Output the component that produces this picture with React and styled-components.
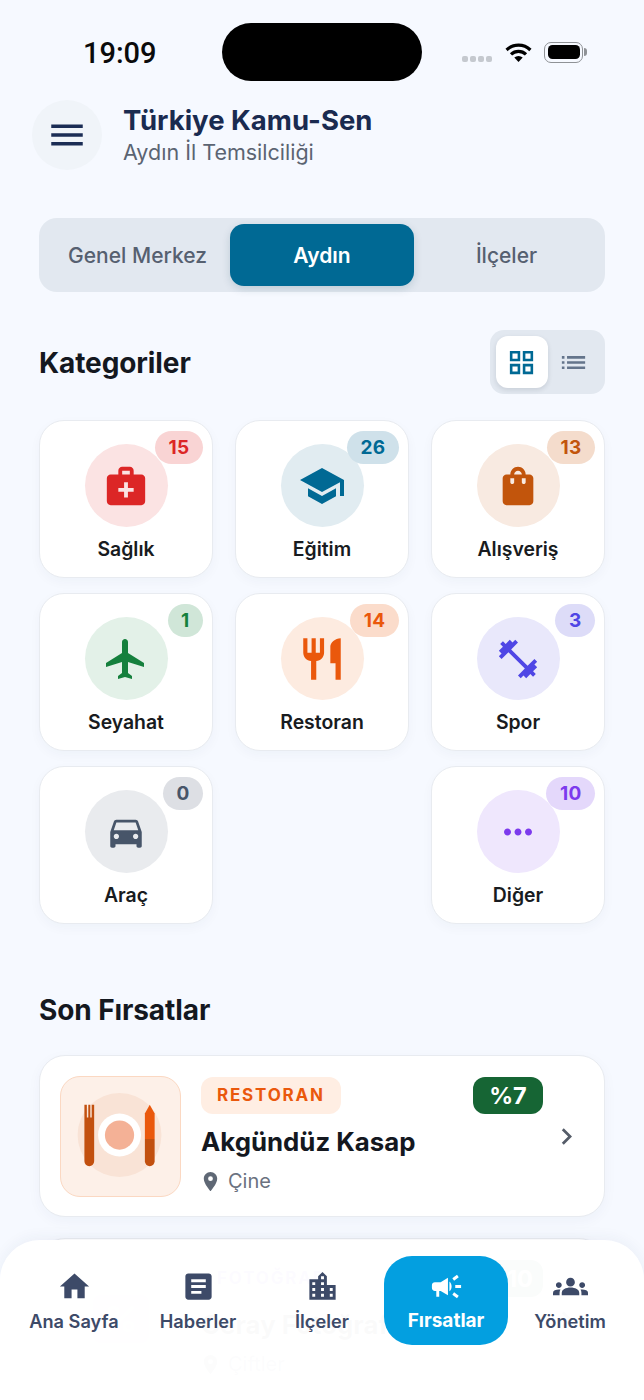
import React from 'react';
import styled, { createGlobalStyle } from 'styled-components';
import {
  MdMedicalServices, MdSchool, MdShoppingBag, MdFlight, MdRestaurant, MdFitnessCenter,
  MdDirectionsCar, MdMoreHoriz, MdHome, MdArticle, MdLocationCity, MdCampaign, MdGroups,
  MdLocationOn, MdChevronRight, MdMenu, MdGridView, MdList, MdPercent,
} from 'react-icons/md';

const GlobalStyle = createGlobalStyle`
  html, body { margin: 0; padding: 0; background: #f6f9ff; }
  * { box-sizing: border-box; }
  body { font-family: Inter, "Noto Sans", sans-serif; }
`;

const Screen = styled.div`
  position: relative;
  width: 644px;
  height: 1400px;
  overflow: hidden;
  background: #f6f9ff;
`;

const StatusBar = styled.div`
  display: flex;
  align-items: center;
  padding-top: 23px;
`;

const Time = styled.div`
  width: 222px;
  margin-top: 2px;
  padding-left: 83px;
  font-family: Roboto, Inter, sans-serif;
  font-size: 29px;
  font-weight: 500;
  color: #0b0b0b;
`;

const Island = styled.div`
  width: 200px;
  height: 58px;
  border-radius: 29px;
  background: #000;
`;

const StatusIcons = styled.div`
  display: flex;
  align-items: center;
  padding-left: 40px;
`;

const SignalDots = styled.div`
  display: flex;
  gap: 2px;
  margin-right: 13px;
  margin-top: 14px;
`;

const SignalDot = styled.span`
  width: 6px;
  height: 6px;
  border-radius: 2px;
  background: #c5c9cf;
`;

const Battery = styled.div`
  position: relative;
  width: 39px;
  height: 21px;
  margin-left: 12px;
  padding: 2.5px;
  border: 1.5px solid #8f9296;
  border-radius: 7px;
  &::before {
    content: '';
    display: block;
    height: 100%;
    border-radius: 4.5px;
    background: #000;
  }
  &::after {
    content: '';
    position: absolute;
    right: -5px;
    top: 5px;
    width: 3px;
    height: 8px;
    border-radius: 0 3px 3px 0;
    background: #8f9296;
  }
`;

const Header = styled.div`
  display: flex;
  align-items: center;
  gap: 21px;
  padding: 19px 0 0 32px;
`;

const MenuButton = styled.div`
  display: flex;
  align-items: center;
  justify-content: center;
  width: 70px;
  height: 70px;
  border-radius: 50%;
  background: #f0f4f9;
  color: #1b2d55;
  font-size: 42px;
`;

const HeaderTitle = styled.div`
  font-size: 27.5px;
  line-height: 33px;
  font-weight: 700;
  color: #1a2b50;
`;

const HeaderSub = styled.div`
  margin-top: 1px;
  font-size: 21.5px;
  line-height: 29px;
  color: #5b6472;
`;

const Segments = styled.div`
  display: flex;
  align-items: center;
  height: 74px;
  margin: 48px 39px 0;
  padding: 6px;
  border-radius: 18px;
  background: #e2e8f0;
`;

const Segment = styled.div`
  display: flex;
  align-items: center;
  justify-content: center;
  flex: ${(p) => (p.$active ? '0 0 184px' : '1')};
  height: 62px;
  border-radius: 14px;
  font-size: 21px;
  font-weight: ${(p) => (p.$active ? 600 : 500)};
  color: ${(p) => (p.$active ? '#fff' : '#566070')};
  background: ${(p) => (p.$active ? '#006994' : 'transparent')};
  box-shadow: ${(p) => (p.$active ? '0 3px 8px rgba(0,60,90,0.16)' : 'none')};
`;

const SectionHead = styled.div`
  display: flex;
  align-items: center;
  justify-content: space-between;
  margin: 38px 39px 26px;
`;

const SectionTitle = styled.h2`
  margin: 0;
  padding-top: 2px;
  font-size: 28px;
  line-height: 33px;
  font-weight: 700;
  letter-spacing: -0.1px;
  color: #14181f;
`;

const ViewToggle = styled.div`
  display: flex;
  align-items: center;
  width: 115px;
  height: 64px;
  padding: 6px;
  border-radius: 14px;
  background: #e2e8f0;
`;

const ToggleBtn = styled.div`
  display: flex;
  align-items: center;
  justify-content: center;
  width: 52px;
  height: 52px;
  border-radius: 12px;
  font-size: 31px;
  color: ${(p) => (p.$active ? '#006994' : '#64748b')};
  background: ${(p) => (p.$active ? '#fff' : 'transparent')};
  box-shadow: ${(p) => (p.$active ? '0 2px 5px rgba(15,23,42,0.12)' : 'none')};
`;

const CategoryGrid = styled.div`
  display: flex;
  flex-wrap: wrap;
  justify-content: space-between;
  row-gap: 15px;
  margin: 0 39px;
`;

const CategoryCard = styled.div`
  position: relative;
  display: flex;
  flex-direction: column;
  align-items: center;
  width: 174px;
  height: 158px;
  padding-top: 23px;
  border: 1px solid #e8ebf0;
  border-radius: 25px;
  background: #fff;
  box-shadow: 0 4px 12px rgba(30,50,90,0.035);
`;

const IconCircle = styled.div`
  display: flex;
  align-items: center;
  justify-content: center;
  width: 83px;
  height: 83px;
  border-radius: 50%;
  font-size: ${(p) => p.$size || 46}px;
  color: ${(p) => p.$color};
  background: ${(p) => p.$bg};
`;

const CategoryLabel = styled.div`
  margin-top: 10px;
  font-size: 19.4px;
  line-height: 24px;
  font-weight: 600;
  color: #181b20;
`;

const CountBadge = styled.div`
  position: absolute;
  top: 10px;
  right: 9px;
  min-width: 35px;
  height: 33px;
  padding: 0 13.5px;
  border-radius: 17px;
  font-size: 19px;
  line-height: 33px;
  font-weight: 700;
  letter-spacing: 0.3px;
  text-align: center;
  color: ${(p) => p.$color};
  background: ${(p) => p.$bg};
`;

const DealsTitle = styled(SectionTitle)`
  margin: 68px 39px 28px;
`;

const DealList = styled.div`
  display: flex;
  flex-direction: column;
  gap: 21px;
  margin: 0 39px;
`;

const DealCard = styled.div`
  display: flex;
  align-items: center;
  height: 162px;
  padding: 0 28px 0 20px;
  border: 1px solid #e8ebf0;
  border-radius: 26px;
  background: #fff;
  box-shadow: 0 4px 14px rgba(30,50,90,0.04);
`;

const DealImage = styled.div`
  display: flex;
  align-items: center;
  justify-content: center;
  flex: none;
  width: 121px;
  height: 121px;
  border: 1px solid ${(p) => p.$border};
  border-radius: 20px;
  background: ${(p) => p.$bg};
`;

const PercentTile = styled.div`
  display: flex;
  align-items: center;
  justify-content: center;
  width: 56px;
  height: 48px;
  border-radius: 8px;
  font-size: 40px;
  color: #fff;
  background: #e9b8f5;
`;

const DealBody = styled.div`
  flex: 1;
  min-width: 0;
  margin-left: 20px;
`;

const DealTop = styled.div`
  display: flex;
  align-items: center;
  justify-content: space-between;
  margin-right: 7px;
`;

const DealTag = styled.div`
  height: 37px;
  padding: 0 16px;
  border-radius: 12px;
  font-size: 17px;
  line-height: 37px;
  font-weight: 700;
  letter-spacing: 1.8px;
  color: ${(p) => p.$color};
  background: ${(p) => p.$bg};
`;

const Discount = styled.div`
  width: 70px;
  height: 37px;
  border-radius: 12px;
  font-size: 23.5px;
  line-height: 37px;
  font-weight: 700;
  text-align: center;
  color: #fff;
  background: #166534;
`;

const DealName = styled.div`
  margin-top: 10px;
  font-size: 25.8px;
  line-height: 36px;
  font-weight: 700;
  color: #14181f;
`;

const DealPlace = styled.div`
  display: flex;
  align-items: center;
  gap: 6px;
  margin-top: 7px;
  font-size: 20px;
  line-height: 28px;
  color: #6b7280;
  svg { font-size: 23px; color: #5f6875; margin-left: -2px; }
`;

const Chevron = styled.div`
  flex: none;
  display: flex;
  font-size: 33px;
  color: #555c68;
  margin-right: -7px;
`;

const BottomNav = styled.nav`
  position: absolute;
  left: 0;
  right: 0;
  bottom: 0;
  display: flex;
  height: 160px;
  padding: 16px 12px 0;
  border-radius: 40px 40px 0 0;
  background: rgba(255,255,255,0.982);
  box-shadow: 0 -3px 14px rgba(30,50,90,0.05);
`;

const NavTab = styled.div`
  display: flex;
  flex-direction: column;
  align-items: center;
  flex: 1;
  height: 89px;
  padding-top: 13px;
  border-radius: 28px;
  font-size: ${(p) => (p.$active ? '19px' : '18.2px')};
  font-weight: ${(p) => (p.$active ? 700 : 600)};
  color: ${(p) => (p.$active ? '#fff' : '#3d4a68')};
  background: ${(p) => (p.$active ? '#039fe0' : 'transparent')};
  svg { font-size: 35px; display: block; }
  span { margin-top: 5px; line-height: 24px; }
`;

const tones = {
  red: { color: '#dc2626', bg: '#fbe3e3', badge: '#f9d4d4' },
  blue: { color: '#006994', bg: '#e1ecf1', badge: '#cfe1ea' },
  brown: { color: '#c2550c', bg: '#f8eae1', badge: '#f4dccc' },
  green: { color: '#15803d', bg: '#e3f1e8', badge: '#d0e6d8' },
  orange: { color: '#ea580c', bg: '#fdebe0', badge: '#fbdccb' },
  indigo: { color: '#4f46e5', bg: '#e9e8fb', badge: '#dddcf8' },
  gray: { color: '#475569', bg: '#e9ebee', badge: '#dddfe4' },
  violet: { color: '#7c3aed', bg: '#efe7fd', badge: '#e4d8fb' },
};

const categories = [
  { name: 'Sağlık', count: 15, tone: 'red', Icon: MdMedicalServices },
  { name: 'Eğitim', count: 26, tone: 'blue', Icon: MdSchool, size: 48 },
  { name: 'Alışveriş', count: 13, tone: 'brown', Icon: MdShoppingBag },
  { name: 'Seyahat', count: 1, tone: 'green', Icon: MdFlight, size: 48 },
  { name: 'Restoran', count: 14, tone: 'orange', Icon: MdRestaurant, size: 50 },
  { name: 'Spor', count: 3, tone: 'indigo', Icon: MdFitnessCenter, size: 46 },
  { name: 'Araç', count: 0, tone: 'gray', Icon: MdDirectionsCar, size: 42 },
  { name: 'Diğer', count: 10, tone: 'violet', Icon: MdMoreHoriz, size: 42 },
];

const tabs = [
  { name: 'Ana Sayfa', Icon: MdHome },
  { name: 'Haberler', Icon: MdArticle },
  { name: 'İlçeler', Icon: MdLocationCity },
  { name: 'Fırsatlar', Icon: MdCampaign, active: true },
  { name: 'Yönetim', Icon: MdGroups },
];

const WifiGlyph = () => (
  <svg width="27" height="19" viewBox="0 0 27 19" fill="none" stroke="#000" strokeWidth="3.2">
    <path d="M1.6 7a17 17 0 0 1 23.8 0" />
    <path d="M6 11.4a10.8 10.8 0 0 1 15 0" />
    <path d="M13.5 19l-4.2-4.4a6 6 0 0 1 8.4 0z" fill="#000" stroke="none" />
  </svg>
);

// tabak, catal ve bicak: restoran kartindaki gorsel
const PlateArt = () => (
  <svg width="120" height="120" viewBox="0 0 122 122" fill="none">
    <circle cx="60" cy="60" r="43" fill="#f9e3d6" />
    <circle cx="60" cy="60" r="22" fill="#fff" />
    <circle cx="60" cy="60" r="15" fill="#f4b196" />
    <path d="M24 29h2.5v13H28V29h2v13h1.5V29H34v58a5 5 0 0 1-10 0z" fill="#c2500f" />
    <path d="M86 87V64h10v23a5 5 0 0 1-10 0z" fill="#c2500f" />
    <path d="M86 64V38l5-9 5 9v26z" fill="#ea580c" />
  </svg>
);

const App = () => (
  <Screen>
    <GlobalStyle />
    <StatusBar>
      <Time>19:09</Time>
      <Island />
      <StatusIcons>
        <SignalDots>
          <SignalDot />
          <SignalDot />
          <SignalDot />
          <SignalDot />
        </SignalDots>
        <WifiGlyph />
        <Battery />
      </StatusIcons>
    </StatusBar>

    <Header>
      <MenuButton><MdMenu /></MenuButton>
      <div>
        <HeaderTitle>Türkiye Kamu-Sen</HeaderTitle>
        <HeaderSub>Aydın İl Temsilciliği</HeaderSub>
      </div>
    </Header>

    <Segments>
      <Segment>Genel Merkez</Segment>
      <Segment $active>Aydın</Segment>
      <Segment>İlçeler</Segment>
    </Segments>

    <SectionHead>
      <SectionTitle>Kategoriler</SectionTitle>
      <ViewToggle>
        <ToggleBtn $active><MdGridView /></ToggleBtn>
        <ToggleBtn><MdList /></ToggleBtn>
      </ViewToggle>
    </SectionHead>

    <CategoryGrid>
      {categories.map(({ name, count, tone, Icon, size }) => (
        <CategoryCard key={name}>
          <CountBadge $color={tones[tone].color} $bg={tones[tone].badge}>{count}</CountBadge>
          <IconCircle $color={tones[tone].color} $bg={tones[tone].bg} $size={size}>
            <Icon />
          </IconCircle>
          <CategoryLabel>{name}</CategoryLabel>
        </CategoryCard>
      ))}
    </CategoryGrid>

    <DealsTitle>Son Fırsatlar</DealsTitle>
    <DealList>
      <DealCard>
        <DealImage $bg="#fdf0e8" $border="#fbd8c2"><PlateArt /></DealImage>
        <DealBody>
          <DealTop>
            <DealTag $color="#ea580c" $bg="#ffeee3">RESTORAN</DealTag>
            <Discount>%7</Discount>
          </DealTop>
          <DealName>Akgündüz Kasap</DealName>
          <DealPlace><MdLocationOn />Çine</DealPlace>
        </DealBody>
        <Chevron><MdChevronRight /></Chevron>
      </DealCard>
      <DealCard>
        <DealImage $bg="#fdf7ff" $border="#f3e8ff">
          <PercentTile><MdPercent /></PercentTile>
        </DealImage>
        <DealBody>
          <DealTop>
            <DealTag $color="#7c3aed" $bg="#f3e8ff">FOTOĞRAF</DealTag>
            <Discount>%10</Discount>
          </DealTop>
          <DealName>Ceray Fotoğraf</DealName>
          <DealPlace><MdLocationOn />Çiftler</DealPlace>
        </DealBody>
        <Chevron><MdChevronRight /></Chevron>
      </DealCard>
    </DealList>

    <BottomNav>
      {tabs.map(({ name, Icon, active }) => (
        <NavTab key={name} $active={active}>
          <Icon />
          <span>{name}</span>
        </NavTab>
      ))}
    </BottomNav>
  </Screen>
);

export default App;
